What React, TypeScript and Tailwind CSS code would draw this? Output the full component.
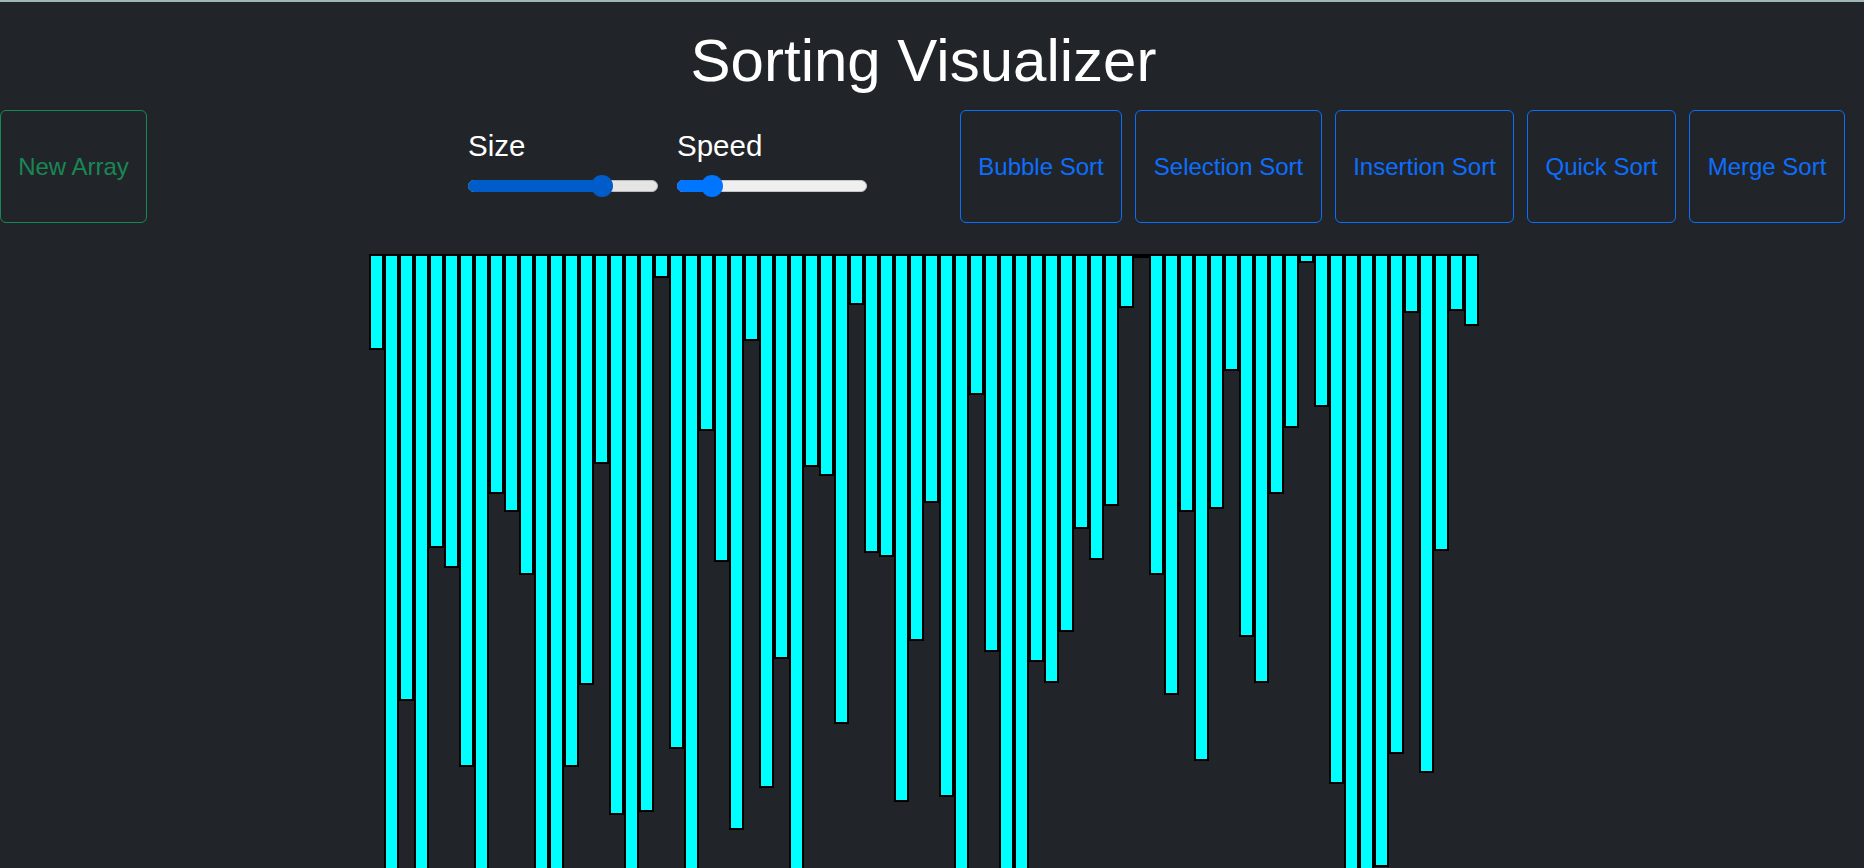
import React from 'react';

// bar heights in px (outer, border included); tall ones run past the bottom of the window
const bars = [
  96, 640, 447, 700, 294, 314, 513, 660, 240, 258,
  321, 690, 650, 513, 431, 210, 561, 700, 558, 24,
  495, 630, 177, 308, 576, 87, 534, 405, 680, 213,
  222, 470, 51, 299, 303, 548, 387, 249, 543, 660,
  141, 398, 700, 640, 408, 429, 378, 275, 306, 252,
  54, 4, 321, 441, 258, 507, 255, 117, 383, 429,
  240, 174, 9, 153, 530, 690, 650, 613, 500, 59,
  519, 297, 57, 72,
];

const sorts = [
  { label: 'Bubble Sort', width: 'w-[162px]' },
  { label: 'Selection Sort', width: 'w-[187px]' },
  { label: 'Insertion Sort', width: 'w-[179px]' },
  { label: 'Quick Sort', width: 'w-[149px]' },
  { label: 'Merge Sort', width: 'w-[156px]' },
];

interface SliderProps {
  label: string;
  thumb: number;
  dark?: boolean;
}

function Slider({ label, thumb, dark }: SliderProps) {
  return (
    <div className="w-[190px] pt-[19px]">
      <div className="text-[29.5px] leading-[34px] text-white">{label}</div>
      <div className="relative mt-[12px] h-[22px]">
        {/* track */}
        <div
          className={
            dark
              ? 'absolute left-0 right-0 top-[5px] h-[12px] rounded-full border border-[#b9b9b9] bg-[#e5e5e5]'
              : 'absolute left-0 right-0 top-[5px] h-[12px] rounded-full border border-[#c4c4c4] bg-[#efefef]'
          }
        />
        {/* filled part */}
        <div
          className={
            dark
              ? 'absolute left-0 top-[5px] h-[12px] rounded-full bg-[#005cc8]'
              : 'absolute left-0 top-[5px] h-[12px] rounded-full bg-[#0075ff]'
          }
          style={{ width: thumb }}
        />
        {/* thumb */}
        <div
          className={
            dark
              ? 'absolute top-0 h-[22px] w-[22px] rounded-full bg-[#005cc8]'
              : 'absolute top-0 h-[22px] w-[22px] rounded-full bg-[#0075ff]'
          }
          style={{ left: thumb - 11 }}
        />
      </div>
    </div>
  );
}

export default function App() {
  return (
    <div className="h-[868px] w-[1864px] overflow-hidden bg-[#212529] font-['Liberation_Sans',Arial,sans-serif]">
      <div className="h-[2px] bg-[#a2b5b8]" />

      <div className="w-[1847px]">
        <h1 className="mt-[23px] text-center text-[60px] leading-[72px] text-white">
          Sorting Visualizer
        </h1>

        {/* Controls */}
        <div className="mt-[13px] flex h-[113px]">
          <button className="flex w-[147px] items-center justify-center rounded-[6px] border border-[#198754] text-[24px] text-[#198754]">
            New Array
          </button>

          <div className="ml-[321px] flex gap-[19px]">
            <Slider label="Size" thumb={134} dark />
            <Slider label="Speed" thumb={35} />
          </div>

          <div className="ml-[93px] flex gap-[13px]">
            {sorts.map((s) => (
              <button
                key={s.label}
                className={`${s.width} flex items-center justify-center rounded-[6px] border border-[#0d6efd] text-[24px] text-[#0d6efd]`}
              >
                {s.label}
              </button>
            ))}
          </div>
        </div>

        {/* Bars */}
        <div className="mx-auto mt-[31px] flex w-[1110px] items-start">
          {bars.map((h, i) => (
            <div
              key={i}
              className="w-[15px] shrink-0 border-2 border-black bg-[#00ffff]"
              style={{ height: h }}
            />
          ))}
        </div>
      </div>
    </div>
  );
}
